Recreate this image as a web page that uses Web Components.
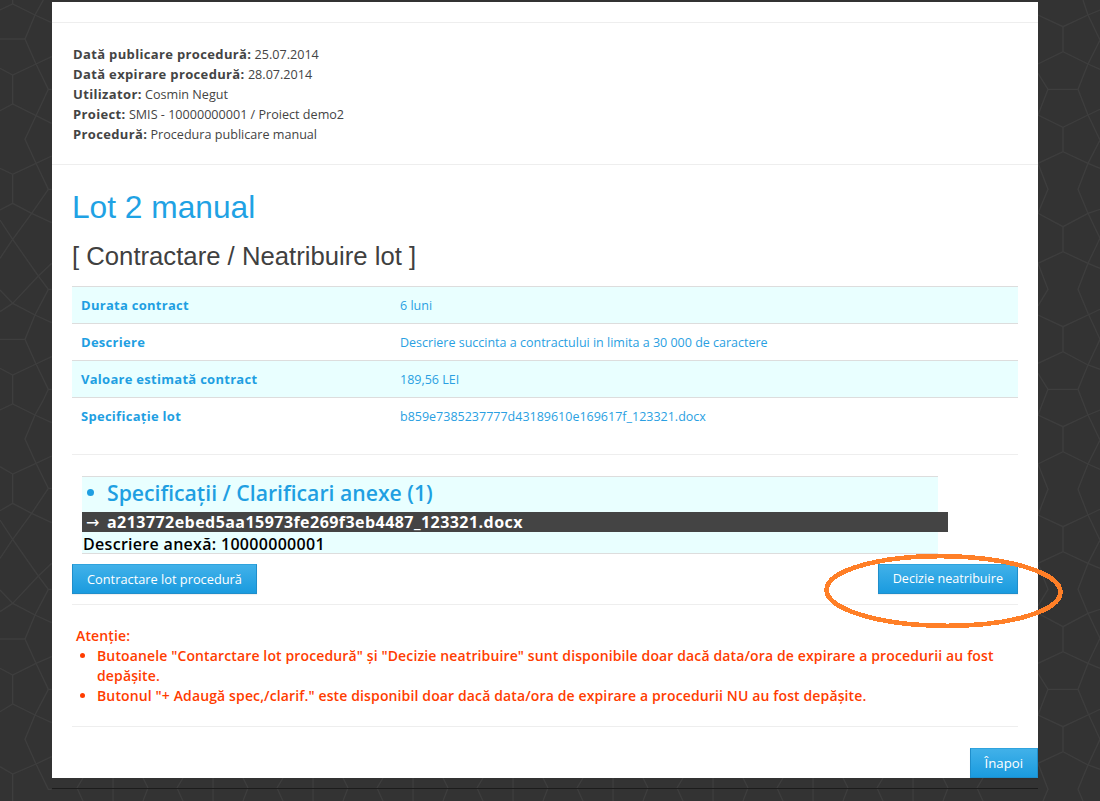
<!DOCTYPE html>
<html lang="ro">
<head>
<meta charset="utf-8">
<title>Lot 2 manual</title>
<style>
  html, body { margin: 0; padding: 0; background: #333; }
  body { font-family: "Open Sans", sans-serif; font-size: 12px; color: #444; }
</style>
</head>
<body>
<page-shell>
  <pattern-strip slot="left" kind="left"></pattern-strip>
  <pattern-strip slot="right" kind="right"></pattern-strip>
  <pattern-strip slot="bottom" kind="bottom"></pattern-strip>

  <info-block>
    <info-line label="Dată publicare procedură:">25.07.2014</info-line>
    <info-line label="Dată expirare procedură:">28.07.2014</info-line>
    <info-line label="Utilizator:">Cosmin Negut</info-line>
    <info-line label="Proiect:">SMIS - 10000000001 / Proiect demo2</info-line>
    <info-line label="Procedură:">Procedura publicare manual</info-line>
  </info-block>

  <lot-heading title-text="Lot 2 manual" sub-text="[ Contractare / Neatribuire lot ]"></lot-heading>

  <lot-table>
    <lot-row label="Durata contract" shaded>6 luni</lot-row>
    <lot-row label="Descriere">Descriere succinta a contractului in limita a 30 000 de caractere</lot-row>
    <lot-row label="Valoare estimată contract" shaded>189,56 LEI</lot-row>
    <lot-row label="Specificație lot">b859e7385237777d43189610e169617f_123321.docx</lot-row>
  </lot-table>

  <annex-box file="a213772ebed5aa15973fe269f3eb4487_123321.docx" note="Descriere anexă: 10000000001">Specificații / Clarificari anexe (1)</annex-box>

  <action-row>
    <blue-button style="--btn-size: 12.8px">Contractare lot procedură</blue-button>
    <blue-button style="--btn-size: 12.6px">Decizie neatribuire</blue-button>
  </action-row>

  <warning-box>
    <li>Butoanele "Contarctare lot procedură" și "Decizie neatribuire" sunt disponibile doar dacă data/ora de expirare a procedurii au fost depășite.</li>
    <li>Butonul "+ Adaugă spec,/clarif." este disponibil doar dacă data/ora de expirare a procedurii NU au fost depășite.</li>
  </warning-box>

  <back-row><blue-button style="--btn-size: 13.2px">Înapoi</blue-button></back-row>
</page-shell>

<script>
// helper: every element gets an open shadow root from a string
function shadow(el, html) {
  el.attachShadow({mode: 'open'});
  el.shadowRoot.innerHTML = html;
}

// background lines, traced from the reference, in 3x coordinates
const leftLines = [
  '0,30 38,12 105,45 155,68', '38,12 38,0', '130,0 105,45 75,117 0,117', '75,117 108,192 145,268 155,268',
  '108,192 155,170', '0,205 38,225 108,192', '38,225 38,312', '0,332 38,312 108,347 155,370',
  '145,268 108,347 75,418 108,490 145,568 155,568', '108,490 155,468', '0,505 38,523 108,490', '38,523 38,610',
  '0,630 38,610 95,640 155,668', '145,568 95,640 38,718 0,775', '0,660 38,718 115,828 145,868 155,868',
  '115,828 155,790', '115,828 38,910 0,870', '0,935 38,910 105,945 155,968', '145,868 105,945 75,1018 0,1018',
  '75,1018 108,1092 145,1168 155,1168', '108,1092 155,1070', '0,1105 38,1125 108,1092', '38,1125 38,1212',
  '145,1168 130,1200',
  '0,1230 38,1212 105,1245 155,1268', '130,1200 105,1245 75,1317 108,1390 145,1465 155,1465', '108,1390 155,1368',
  '0,1400 38,1422 108,1390', '38,1422 38,1510', '0,1532 38,1510 95,1540 155,1568', '145,1465 95,1540 38,1618 0,1675',
  '0,1560 38,1618 115,1728 145,1768 155,1768', '115,1728 155,1690', '115,1728 38,1810 0,1770',
  '0,1835 38,1810 105,1845 155,1868', '145,1768 105,1845 75,1917 0,1917', '75,1917 108,1990 145,2068 155,2068',
  '108,1990 155,1970', '0,2005 38,2025 108,1990', '38,2025 38,2112', '0,2135 38,2112 105,2145 155,2168',
  '145,2068 105,2145 75,2218 108,2292 145,2368 155,2368', '108,2292 155,2270', '0,2300 38,2322 108,2292', '38,2322 38,2403'
];
const rightLines = [
  '0,45 75,80 150,45 186,30', '75,80 75,155', '0,192 75,155 150,192 186,208',
  '135,0 150,45 186,120 150,192 120,268 30,268 0,220', '30,268 0,345', '0,345 75,382 150,345 186,328',
  '120,268 150,345 186,420 150,490 120,568 150,640 186,715 150,790 120,868 150,940 186,1018 150,1095 120,1168 30,1168 0,1120',
  '75,382 75,455', '0,490 75,455 150,490 186,505', '0,490 30,568 0,640', '0,640 75,680 150,640 186,628',
  '75,680 75,755', '0,790 75,755 150,790 186,805', '0,790 30,868 0,918', '0,945 75,980 150,945 186,928',
  '75,980 75,1055', '0,1090 75,1055 150,1095 186,1108', '30,1168 0,1245', '120,1168 150,1245 186,1320 150,1392 120,1468 150,1545 186,1620 150,1690 120,1768 150,1840 186,1915 150,1990 120,2068 150,2140 186,2218 150,2295 120,2368 135,2403',
  '0,1245 75,1280 150,1245 186,1230', '75,1280 75,1355', '0,1392 75,1355 150,1392 186,1408', '0,1392 30,1468 0,1545',
  '0,1545 75,1580 150,1545 186,1528', '75,1580 75,1655', '0,1690 75,1655 150,1690 186,1705', '0,1690 30,1768 0,1818',
  '0,1840 75,1880 150,1840 186,1828', '75,1880 75,1955', '0,1990 75,1955 150,1990 186,2005', '0,2020 30,2068 120,2068',
  '30,2068 0,2145', '0,2145 75,2180 150,2145 186,2128', '75,2180 75,2255', '0,2290 75,2255 150,2295 186,2308',
  '0,2290 30,2368 15,2403'
];

class PatternStrip extends HTMLElement {
  constructor() {
    super();
    const kind = this.getAttribute('kind');
    let svg;
    if (kind === 'bottom') {
      // the strip under the panel repeats every 100px
      let lines = '';
      for (let x = 0; x < 1000; x += 100) {
        lines += `<polyline points="${x - 39},0 ${x - 39},23"/>`;
        lines += `<polyline points="${x - 9},0 ${x - 4},10 ${x - 9},23"/>`;
        lines += `<polyline points="${x + 31},0 ${x + 25},10 ${x + 31},23"/>`;
      }
      svg = `<svg width="986" height="23" viewBox="0 0 986 23" fill="none" stroke="#3e3e3e" stroke-width="1.3">${lines}</svg><i></i>`;
    } else {
      const list = kind === 'left' ? leftLines : rightLines;
      const w = kind === 'left' ? 52 : 62;
      const lines = list.map(p => `<polyline points="${p}"/>`).join('');
      svg = `<svg width="${w}" height="801" viewBox="0 0 ${w * 3} 2403" fill="none" stroke="#3e3e3e" stroke-width="4">${lines}</svg>`;
    }
    shadow(this, `<style>
      :host { display: block; position: relative; overflow: hidden; }
      svg { display: block; }
      i { position: absolute; left: 0; right: 0; top: 10px; height: 1px; background: #1c1c1c; }
    </style>${svg}`);
  }
}

class PageShell extends HTMLElement {
  constructor() {
    super();
    shadow(this, `<style>
      :host { display: block; position: relative; width: 1100px; height: 801px; overflow: hidden; }
      .grid { display: grid; grid-template-columns: 52px 986px 62px; grid-template-rows: 2px 776px 23px; height: 801px; }
      .left { grid-row: 1 / 4; grid-column: 1; }
      .right { grid-row: 1 / 4; grid-column: 3; }
      .panel { grid-row: 2; grid-column: 2; background: #fff; display: flex; flex-direction: column; }
      .bottom { grid-row: 3; grid-column: 2; }
      .ring { position: absolute; left: 820px; top: 550px; }
    </style>
    <div class="grid">
      <div class="left"><slot name="left"></slot></div>
      <div class="panel"><slot></slot></div>
      <div class="right"><slot name="right"></slot></div>
      <div class="bottom"><slot name="bottom"></slot></div>
    </div>
    <svg class="ring" width="250" height="84" viewBox="0 0 250 84" shape-rendering="crispEdges">
      <ellipse cx="123.5" cy="41" rx="117" ry="34.8" transform="rotate(0.6 123.5 41)" fill="none" stroke="#ff7f27" stroke-width="4.6"/>
    </svg>`);
  }
}

class InfoBlock extends HTMLElement {
  constructor() {
    super();
    shadow(this, `<style>
      :host { display: block; margin-top: 20px; padding: 22px 21px 19px; border-top: 1px solid #eee; border-bottom: 1px solid #eee; }
    </style><slot></slot>`);
  }
}

class InfoLine extends HTMLElement {
  constructor() {
    super();
    shadow(this, `<style>
      :host { display: block; height: 20px; font-size: 12.6px; line-height: 20px; color: #444; }
      b { font-size: 13px; line-height: 1; font-weight: 700; letter-spacing: .35px; }
    </style><b></b> <slot></slot>`);
    this.shadowRoot.querySelector('b').textContent = this.getAttribute('label');
  }
}

class LotHeading extends HTMLElement {
  constructor() {
    super();
    shadow(this, `<style>
      :host { display: block; padding: 0 20px; font-family: "Liberation Sans", Arial, sans-serif; }
      h1 { margin: 22px 0 0; font-size: 31.7px; font-weight: 400; line-height: 40px; color: #1fa2e4; }
      h3 { margin: 9px 0 0; font-size: 25.7px; font-weight: 400; line-height: 40px; color: #404040; }
    </style><h1></h1><h3></h3>`);
    this.shadowRoot.querySelector('h1').textContent = this.getAttribute('title-text');
    this.shadowRoot.querySelector('h3').textContent = this.getAttribute('sub-text');
  }
}

class LotTable extends HTMLElement {
  constructor() {
    super();
    shadow(this, `<style>
      :host { display: block; margin: 10px 20px 0; padding-bottom: 20px; border-bottom: 1px solid #eee; }
    </style><slot></slot>`);
  }
}

class LotRow extends HTMLElement {
  constructor() {
    super();
    shadow(this, `<style>
      :host { display: grid; grid-template-columns: 319px 1fr; height: 36px; align-items: center; border-top: 1px solid #ddd; padding-left: 9px; font-size: 12.5px; color: #2a9fe2; }
      :host([shaded]) { background: #e9ffff; }
      b { font-size: 13px; font-weight: 700; letter-spacing: .28px; color: #1f9fe2; }
    </style><b></b><span><slot></slot></span>`);
    this.shadowRoot.querySelector('b').textContent = this.getAttribute('label');
  }
}

class AnnexBox extends HTMLElement {
  constructor() {
    super();
    shadow(this, `<style>
      :host { display: block; margin: 21px 100px 0 30px; background: #e9ffff; border-top: 1px solid #ddd; border-bottom: 1px solid #ddd; height: 76px; }
      h4 { margin: 0; height: 35px; box-sizing: border-box; padding: 0 0 5px 4px; display: flex; align-items: center; font-size: 21.2px; font-weight: 600; color: #1f9fe2; }
      h4 i { width: 7px; height: 7px; border-radius: 50%; background: #1f9fe2; margin-right: 13px; margin-left: 1px; }
      .file { width: 866px; height: 20px; background: #444; color: #fff; font-size: 16px; font-weight: 700; letter-spacing: .45px; line-height: 20px; white-space: nowrap; padding-left: 4px; box-sizing: border-box; }
      .file span { display: inline-block; width: 21px; font-family: "DejaVu Sans", sans-serif; font-weight: 400; letter-spacing: 0; }
      .note { height: 20px; padding-top: 2px; line-height: 20px; font-size: 16px; font-weight: 600; letter-spacing: .3px; color: #000; padding-left: 1px; }
    </style>
    <h4><i></i><span><slot></slot></span></h4>
    <div class="file"><span>→</span><em></em></div>
    <div class="note"></div>`);
    const name = this.shadowRoot.querySelector('em');
    name.style.fontStyle = 'normal';
    name.textContent = this.getAttribute('file');
    this.shadowRoot.querySelector('.note').textContent = this.getAttribute('note');
  }
}

class ActionRow extends HTMLElement {
  constructor() {
    super();
    shadow(this, `<style>
      :host { display: flex; justify-content: space-between; margin: 10px 20px 0; padding-bottom: 10px; border-bottom: 1px solid #eee; }
    </style><slot></slot>`);
  }
}

class BlueButton extends HTMLElement {
  constructor() {
    super();
    shadow(this, `<style>
      :host { display: block; box-sizing: border-box; height: 30px; padding: 0 14px; line-height: 28px; font-size: var(--btn-size, 13px); color: #fff; white-space: nowrap;
        background: linear-gradient(#41b1e9, #1a9bdf); border: 1px solid #1f8ecb; border-top-color: #2fa3dd; box-shadow: 0 1px 1px rgba(0,0,0,.06); }
    </style><slot></slot>`);
  }
}

class WarningBox extends HTMLElement {
  constructor() {
    super();
    shadow(this, `<style>
      :host { display: block; margin: 0 20px; padding: 21px 4px 20px; border-bottom: 1px solid #eee; color: #ff3c00; font-size: 14px; font-weight: 600; letter-spacing: .13px; line-height: 20px; }
      ul { margin: 0; padding: 0 0 0 21px; }
      ::slotted(li) { margin: 0; }
    </style><div>Atenție:</div><ul><slot></slot></ul>`);
  }
}

class BackRow extends HTMLElement {
  constructor() {
    super();
    shadow(this, `<style>
      :host { display: flex; justify-content: flex-end; margin-top: auto; }
    </style><slot></slot>`);
  }
}

customElements.define('pattern-strip', PatternStrip);
customElements.define('page-shell', PageShell);
customElements.define('info-block', InfoBlock);
customElements.define('info-line', InfoLine);
customElements.define('lot-heading', LotHeading);
customElements.define('lot-table', LotTable);
customElements.define('lot-row', LotRow);
customElements.define('annex-box', AnnexBox);
customElements.define('action-row', ActionRow);
customElements.define('blue-button', BlueButton);
customElements.define('warning-box', WarningBox);
customElements.define('back-row', BackRow);
</script>
</body>
</html>
